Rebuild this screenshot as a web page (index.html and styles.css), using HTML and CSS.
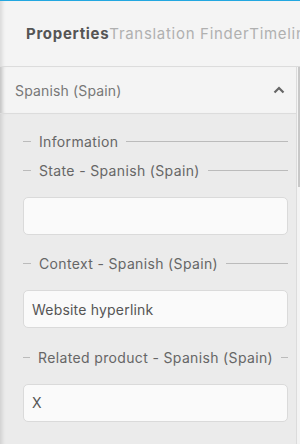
FILE: index.html
```html
<!DOCTYPE html>
<html>
<head>
	<meta charset="UTF-8">
	<title>Properties</title>
	<link rel="stylesheet" href="styles.css">
</head>
<body>
	<div id="painel">
		<div id="abas">
			<span class="aba ativa">Properties</span>
			<span class="aba">Translation Finder</span>
			<span class="aba">Timeline</span>
		</div>

		<div id="acordeao">
			<div id="acordeao-titulo">
				<span>Spanish (Spain)</span>
				<svg class="seta" width="12" height="8" viewBox="0 0 12 8">
					<path d="M1.5 6.5 L6 2 L10.5 6.5" fill="none" stroke="#666" stroke-width="2.2"/>
				</svg>
			</div>

			<div id="acordeao-corpo">
				<div class="legenda">Information</div>

				<div class="grupo">
					<div class="legenda">State - Spanish (Spain)</div>
					<div class="campo"></div>
				</div>

				<div class="grupo">
					<div class="legenda">Context - Spanish (Spain)</div>
					<div class="campo">Website hyperlink</div>
				</div>

				<div class="grupo">
					<div class="legenda">Related product - Spanish (Spain)</div>
					<div class="campo">X</div>
				</div>
			</div>
		</div>

		<div id="rolagem"></div>
	</div>
</body>
</html>
```

FILE: styles.css
```css
* {
	font-family: Inter, "Noto Sans", sans-serif;
	box-sizing: border-box;
}

body {
	margin: 0;
	background-color: #f4f4f4;
	overflow: hidden;
}

#painel {
	position: relative;
	height: 444px;
	border-top: 1px solid #22a7e0;
	box-shadow: inset 5px 0 4px -3px rgba(0, 0, 0, .12);
}

#abas {
	display: flex;
	align-items: center;
	height: 66px;
	padding-left: 26px;
	white-space: nowrap;
	overflow: hidden;
	border-bottom: 1px solid #dcdcdc;
}

.aba {
	font-size: 15px;
	letter-spacing: .7px;
	color: #b0b0b0;
}

.aba.ativa {
	font-weight: 700;
	color: #555;
}

#acordeao {
	width: 297px;
	border-right: 1px solid #dcdcdc;
}

#acordeao-titulo {
	display: flex;
	align-items: center;
	justify-content: space-between;
	height: 47px;
	padding: 0 11px 0 15px;
	font-size: 14px;
	letter-spacing: .15px;
	color: #777;
	border-bottom: 1px solid #dcdcdc;
	box-shadow: inset 5px 0 4px -3px rgba(0, 0, 0, .12);
}

#acordeao-corpo {
	background-color: #ebebeb;
	padding: 17px 8px 30px 23px;
	box-shadow: inset 5px 0 4px -3px rgba(0, 0, 0, .12);
}

.legenda {
	display: flex;
	align-items: center;
	gap: 8px;
	height: 20px;
	font-size: 14px;
	letter-spacing: .35px;
	color: #666;
	white-space: nowrap;
}

.legenda::before {
	content: "";
	width: 8px;
	border-top: 1px solid #bbb;
}

.legenda::after {
	content: "";
	flex-grow: 1;
	min-width: 7px;
	border-top: 1px solid #bbb;
}

.grupo {
	margin-top: 9px;
}

.grupo + .grupo {
	margin-top: 19px;
}

.campo {
	margin-top: 16.5px;
	height: 38px;
	padding: 0 8px;
	display: flex;
	align-items: center;
	font-size: 14px;
	letter-spacing: .2px;
	color: #555;
	background-color: #fafafa;
	border: 1px solid #dadada;
	border-radius: 5px;
}

#rolagem {
	position: absolute;
	right: 0;
	top: 66px;
	width: 2px;
	height: 120px;
	background-color: #c8c8c8;
}
```
